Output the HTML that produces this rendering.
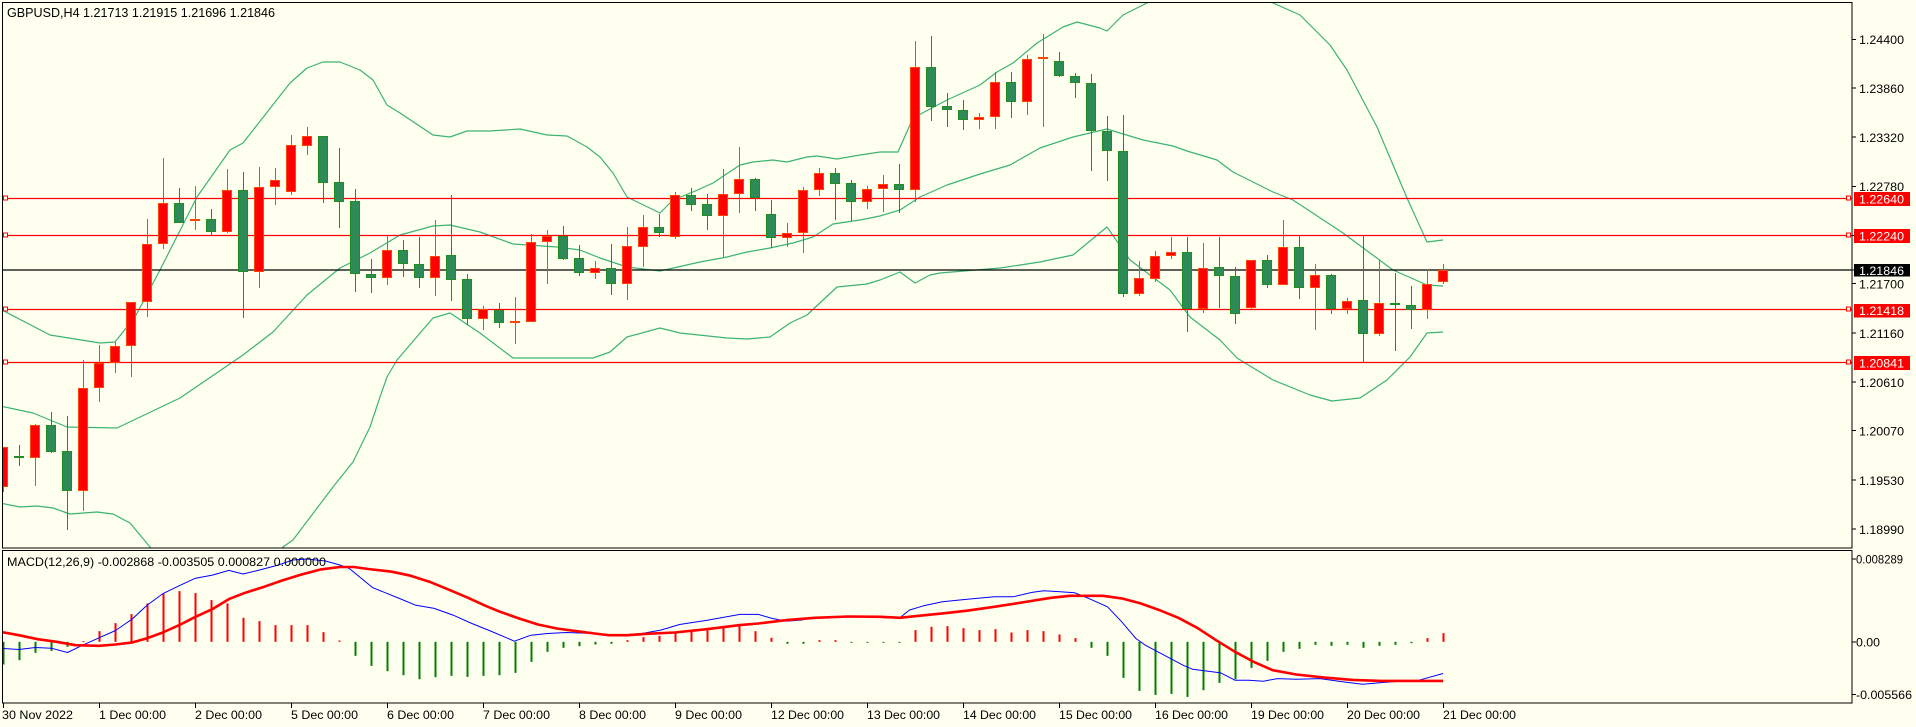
<!DOCTYPE html>
<html><head><meta charset="utf-8"><style>
html,body{margin:0;padding:0;background:#fffff0;width:1916px;height:727px;overflow:hidden}
svg{display:block}
text{font-family:"Liberation Sans",sans-serif;fill:#000}
</style></head><body>
<svg id="s" width="1916" height="727" viewBox="0 0 1916 727" xmlns="http://www.w3.org/2000/svg">
<rect width="1916" height="727" fill="#fffff0"/>
<defs>
<clipPath id="cm"><rect x="3" y="3" width="1849" height="545"/></clipPath>
<clipPath id="cd"><rect x="3" y="551" width="1849" height="152"/></clipPath>
</defs>
<g id="main" clip-path="url(#cm)"></g>
<g id="macd" clip-path="url(#cd)"></g>
<g id="frame" fill="none" stroke="#000" stroke-width="1">
<rect x="2.5" y="2.5" width="1849.5" height="545.5"/>
<rect x="2.5" y="550.5" width="1849.5" height="152.5"/>
</g>
<g id="ticks" stroke="#000" stroke-width="1"></g>
<text x="7" y="17" font-size="12.5" textLength="268" lengthAdjust="spacingAndGlyphs">GBPUSD,H4  1.21713 1.21915 1.21696 1.21846</text>
<text x="7" y="566" font-size="12" textLength="319" lengthAdjust="spacingAndGlyphs">MACD(12,26,9) -0.002868 -0.003505 0.000827 0.000000</text>
<g font-size="12.4">
<text x="1859" y="44" textLength="45" lengthAdjust="spacingAndGlyphs">1.24400</text>
<text x="1859" y="93" textLength="45" lengthAdjust="spacingAndGlyphs">1.23860</text>
<text x="1859" y="142" textLength="45" lengthAdjust="spacingAndGlyphs">1.23320</text>
<text x="1859" y="191" textLength="45" lengthAdjust="spacingAndGlyphs">1.22780</text>
<text x="1859" y="288.5" textLength="45" lengthAdjust="spacingAndGlyphs">1.21700</text>
<text x="1859" y="338" textLength="45" lengthAdjust="spacingAndGlyphs">1.21160</text>
<text x="1859" y="387" textLength="45" lengthAdjust="spacingAndGlyphs">1.20610</text>
<text x="1859" y="435.5" textLength="45" lengthAdjust="spacingAndGlyphs">1.20070</text>
<text x="1859" y="485" textLength="45" lengthAdjust="spacingAndGlyphs">1.19530</text>
<text x="1859" y="534" textLength="45" lengthAdjust="spacingAndGlyphs">1.18990</text>
<rect x="1854" y="192" width="56" height="14" fill="#ff0000"/>
<text x="1859" y="203.5" textLength="45" lengthAdjust="spacingAndGlyphs" style="fill:#fff">1.22640</text>
<rect x="1854" y="229" width="56" height="14" fill="#ff0000"/>
<text x="1859" y="240.5" textLength="45" lengthAdjust="spacingAndGlyphs" style="fill:#fff">1.22240</text>
<rect x="1854" y="264" width="56" height="12.5" fill="#000"/>
<text x="1859" y="275" textLength="45" lengthAdjust="spacingAndGlyphs" style="fill:#fff">1.21846</text>
<rect x="1854" y="304" width="56" height="13.5" fill="#ff0000"/>
<text x="1859" y="315" textLength="45" lengthAdjust="spacingAndGlyphs" style="fill:#fff">1.21418</text>
<rect x="1854" y="356" width="56" height="14" fill="#ff0000"/>
<text x="1859" y="367.5" textLength="45" lengthAdjust="spacingAndGlyphs" style="fill:#fff">1.20841</text>
<text x="1856" y="563.5" textLength="47" lengthAdjust="spacingAndGlyphs">0.008289</text>
<text x="1856" y="646.5" textLength="24" lengthAdjust="spacingAndGlyphs">0.00</text>
<text x="1856" y="699" textLength="56" lengthAdjust="spacingAndGlyphs">-0.005566</text>
</g>
<g font-size="12.4">
<text x="2" y="719" textLength="71" lengthAdjust="spacingAndGlyphs">30 Nov 2022</text>
<text x="99" y="719" textLength="67" lengthAdjust="spacingAndGlyphs">1 Dec 00:00</text>
<text x="195" y="719" textLength="67" lengthAdjust="spacingAndGlyphs">2 Dec 00:00</text>
<text x="291" y="719" textLength="67" lengthAdjust="spacingAndGlyphs">5 Dec 00:00</text>
<text x="387" y="719" textLength="67" lengthAdjust="spacingAndGlyphs">6 Dec 00:00</text>
<text x="483" y="719" textLength="67" lengthAdjust="spacingAndGlyphs">7 Dec 00:00</text>
<text x="579" y="719" textLength="67" lengthAdjust="spacingAndGlyphs">8 Dec 00:00</text>
<text x="675" y="719" textLength="67" lengthAdjust="spacingAndGlyphs">9 Dec 00:00</text>
<text x="771" y="719" textLength="73" lengthAdjust="spacingAndGlyphs">12 Dec 00:00</text>
<text x="867" y="719" textLength="73" lengthAdjust="spacingAndGlyphs">13 Dec 00:00</text>
<text x="963" y="719" textLength="73" lengthAdjust="spacingAndGlyphs">14 Dec 00:00</text>
<text x="1059" y="719" textLength="73" lengthAdjust="spacingAndGlyphs">15 Dec 00:00</text>
<text x="1155" y="719" textLength="73" lengthAdjust="spacingAndGlyphs">16 Dec 00:00</text>
<text x="1251" y="719" textLength="73" lengthAdjust="spacingAndGlyphs">19 Dec 00:00</text>
<text x="1347" y="719" textLength="73" lengthAdjust="spacingAndGlyphs">20 Dec 00:00</text>
<text x="1443" y="719" textLength="73" lengthAdjust="spacingAndGlyphs">21 Dec 00:00</text>
</g>
</svg>
<script>
(function(){
var NS="http://www.w3.org/2000/svg";
function el(p,t,a){var e=document.createElementNS(NS,t);for(var k in a)e.setAttribute(k,a[k]);p.appendChild(e);return e;}
var main=document.getElementById('main'),macd=document.getElementById('macd'),ticks=document.getElementById('ticks');
function pl(g,pts,col,w){el(g,'polyline',{points:pts.map(function(p){return p[0]+','+p[1]}).join(' '),fill:'none',stroke:col,'stroke-width':w,'stroke-linejoin':'round'});}
// bands
var up=[[0,309],[50,335],[100,343],[115,342],[135,317],[160,270],[197,197],[230,150],[243,143],[290,83],[307,68],[323,62],[340,62],[360,70],[373,80],[387,105],[400,113],[433,135],[450,137],[467,131],[490,131],[520,129],[547,135],[567,136],[587,147],[600,157],[613,173],[627,197],[660,213],[673,200],[693,192],[713,183],[740,165],[753,162],[773,160],[787,162],[807,157],[817,156],[837,159],[860,155],[880,152],[898,152],[913,118],[947,100],[980,85],[997,72],[1013,63],[1037,43],[1063,27],[1077,22],[1100,28],[1107,31],[1123,15],[1147,3],[1160,-5],[1260,-5],[1273,3],[1300,15],[1330,45],[1347,70],[1377,127],[1407,198],[1427,242],[1443,240]];
var lo=[[0,503],[20,507],[37,506],[53,508],[70,514],[97,512],[113,514],[130,523],[150,547],[160,560],[270,560],[283,547],[293,540],[333,487],[353,462],[370,427],[380,397],[387,377],[397,360],[433,318],[450,313],[480,333],[513,358],[593,358],[610,352],[627,337],[660,328],[680,333],[727,338],[747,339],[770,337],[790,323],[807,315],[837,287],[867,284],[880,280],[900,272],[915,283],[930,275],[940,273],[1000,268],[1040,262],[1073,255],[1107,227],[1130,260],[1170,290],[1190,317],[1220,340],[1237,358],[1273,380],[1310,395],[1332,401],[1360,398],[1387,380],[1410,357],[1427,333],[1443,332]];
var mid=[[0,406],[33,413],[67,427],[117,428],[180,398],[243,355],[273,332],[307,295],[340,268],[370,253],[400,235],[433,226],[450,225],[480,232],[513,244],[557,247],[580,250],[600,258],[627,267],[643,269],[660,271],[700,262],[727,257],[747,252],[770,248],[793,243],[813,237],[833,224],[860,220],[880,216],[900,210],[920,197],[947,185],[980,174],[1010,165],[1040,148],[1073,137],[1107,129],[1120,133],[1143,140],[1173,146],[1187,151],[1217,160],[1233,172],[1273,192],[1293,200],[1343,233],[1393,270],[1427,285],[1443,286]];
pl(main,up,'#3cb371',1.2);pl(main,mid,'#3cb371',1.2);pl(main,lo,'#3cb371',1.2);
// level lines
[198.5,235.5,309.5,362.5].forEach(function(y){
 el(main,'line',{x1:2,y1:y,x2:1852,y2:y,stroke:'#ff0000','stroke-width':1.3});
 el(main,'rect',{x:3.5,y:y-2.5,width:4,height:4,fill:'#fffff0',stroke:'#ff0000','stroke-width':1});
 el(main,'rect',{x:1846.5,y:y-2.5,width:4,height:4,fill:'#fffff0',stroke:'#ff0000','stroke-width':1});
});
el(main,'line',{x1:2,y1:270,x2:1852,y2:270,stroke:'#000','stroke-width':1.2});
// candles
var C=[['r',447,487,447,492],['g',456,458,445,466],['r',425,458,424,486],['g',425,452,412,453],['g',451,491,416,530],['r',388,491,360,511],['r',363,388,345,402],['r',346,363,342,373],['r',302,346,302,377],['r',244,302,219,317],
['r',203,244,158,249],['g',203,223,188,223],['r',219,220,186,230],['g',219,232,209,235],['r',190,232,169,233],['g',190,272,172,318],['r',187,272,167,288],['r',180,187,168,205],['r',145,192,135,195],['r',136,146,127,155],
['g',136,183,136,203],['g',182,202,148,228],['g',201,274,189,292],['g',274,278,259,293],['r',250,278,236,285],['g',250,264,240,277],['g',264,278,237,288],['r',256,278,220,296],['g',255,280,195,301],['g',279,319,274,325],
['r',309,319,306,330],['g',310,323,303,328],['r',321,323,297,344],['r',242,322,234,322],['r',236,242,230,284],['g',236,259,226,260],['g',258,273,245,276],['r',268,273,261,279],['g',268,284,244,295],['r',246,284,227,300],
['r',227,247,215,267],['g',227,233,214,237],['r',195,237,192,239],['g',195,205,188,211],['g',204,216,194,230],['r',194,216,169,257],['r',179,194,147,213],['g',179,198,178,211],['g',214,238,200,248],['r',233,238,223,247],
['r',190,233,187,253],['r',173,190,168,196],['g',173,184,168,220],['g',183,202,180,221],['r',189,202,186,209],['r',184,189,175,212],['g',184,190,164,213],['r',67,190,41,202],['g',67,107,36,121],['g',106,110,93,127],
['g',110,120,100,130],['r',117,120,113,129],['r',82,117,72,129],['g',82,102,72,118],['r',59,102,55,115],['r',57,59,34,127],['g',61,76,52,77],['g',76,83,73,98],['g',83,131,74,171],['g',131,151,116,181],
['g',151,294,115,297],['r',278,294,261,296],['r',256,279,251,282],['r',252,256,237,259],['g',252,309,237,332],['r',268,309,243,313],['g',267,276,237,308],['g',276,314,267,324],['r',260,308,260,309],['g',260,285,255,288],
['r',247,285,220,285],['g',247,288,236,299],['r',275,288,264,330],['g',275,309,274,314],['r',301,309,298,314],['g',300,334,236,362],['r',303,334,260,336],['g',303,305,273,351],['g',305,310,286,329],['r',284,310,269,319],
['r',270,282,264,284]];
C.forEach(function(c,k){
 var cx=3+16*k,red=c[0]=='r',st=red?'#ff4500':'#228b22',fi=red?'#ff0000':'#2e8b57';
 el(main,'rect',{x:cx,y:c[3],width:1,height:Math.max(1,c[4]-c[3]),fill:st});
 var h=c[2]-c[1];if(h<2){h=2;}
 el(main,'rect',{x:cx-4.5,y:c[1]+0.5,width:9,height:Math.max(1,h-1),fill:fi,stroke:st,'stroke-width':1});
});
// MACD histogram (zoom y -> actual)
function yz(v){return 545+v/2.995;}
var H=[358,345,323,317,305,288,258,234,207,175,145,138,144,165,175,218,228,240,240,240,261,286,332,362,378,390,402,396,392,395,392,390,383,350,320,308,303,298,296,285,276,272,260,256,256,248,244,258,278,296,296,285,285,293,293,291,293,255,245,243,249,255,252,262,255,258,268,279,308,332,398,437,449,446,455,435,413,402,368,347,320,311,299,302,299,308,302,299,294,279,264];
var z=yz(290);
H.forEach(function(v,k){
 var cx=3+16*k,y=yz(v),col=v<290?'#ff0000':'#008000';
 var t=Math.min(y,z),h=Math.abs(y-z);if(h<1)h=1;
 el(macd,'rect',{x:cx-0.5,y:t,width:2,height:h,fill:col});
});
var B1=[[7,310],[40,313],[75,307],[109,309],[143,322],[175,300],[210,278],[245,256],[280,222],[312,180],[346,145],[380,122],[413,100],[450,90],[485,76],[515,87],[550,75],[590,60],[620,45],[650,42],[690,48],[720,60],[740,70],[790,128],[850,162],[880,180],[920,190],[960,210],[1000,235],[1040,258],[1090,288],[1125,270],[1160,265],[1200,262],[1260,265],[1300,272],[1330,268],[1360,265],[1400,255],[1440,238],[1500,225],[1568,208]];
var B2=[[0,212],[20,208],[60,208],[90,220],[120,228],[150,225],[180,218],[230,214],[290,215],[330,218],[360,218],[380,195],[410,182],[450,170],[500,163],[560,155],[600,155],[640,142],[665,137],[700,140],[730,143],[760,160],[800,185],[830,230],[860,280],[880,300],[920,330],[960,360],[980,372],[1040,383],[1070,405],[1100,405],[1130,408],[1160,400],[1200,402],[1250,400],[1300,410],[1340,417],[1380,412],[1420,408],[1460,405],[1511,385]];
var R1=[[0,260],[40,270],[80,282],[120,290],[160,300],[210,302],[245,298],[280,292],[310,280],[345,262],[380,240],[410,218],[450,192],[485,162],[520,143],[560,125],[600,105],[640,88],[680,73],[720,66],[750,66],[780,72],[830,80],[870,92],[910,110],[950,133],[990,157],[1030,183],[1060,200],[1100,220],[1140,238],[1180,250],[1220,258],[1260,265],[1290,270],[1330,270],[1370,266],[1430,262],[1500,252],[1568,240]];
var R2=[[0,243],[60,235],[120,225],[180,218],[250,214],[320,215],[360,218],[400,212],[450,205],[500,197],[560,185],[620,172],[680,158],[720,152],[790,152],[830,160],[870,175],[910,195],[950,218],[990,248],[1030,285],[1070,320],[1110,350],[1150,375],[1200,388],[1260,397],[1320,404],[1380,407],[1440,407],[1511,407]];
function cv(a,off){return a.map(function(p){return [(p[0]/2.119+off).toFixed(1),yz(p[1]).toFixed(1)];});}
var blue=cv(B1,0).concat(cv(B2,730).slice(1)),red=cv(R1,0).concat(cv(R2,730).slice(1));
pl(macd,blue,'#0000ff',1);pl(macd,red,'#ff0000',2.6);
// ticks
[39.5,88,137,186.5,235.5,270,283.5,333,382,430.5,480,529,559,642,694.5].forEach(function(y){el(ticks,'line',{x1:1852,y1:y,x2:1856,y2:y});});
for(var j=0;j<16;j++){var x=3.5+96*j;el(ticks,'line',{x1:x,y1:703,x2:x,y2:708});}
})();
</script>
</body></html>
